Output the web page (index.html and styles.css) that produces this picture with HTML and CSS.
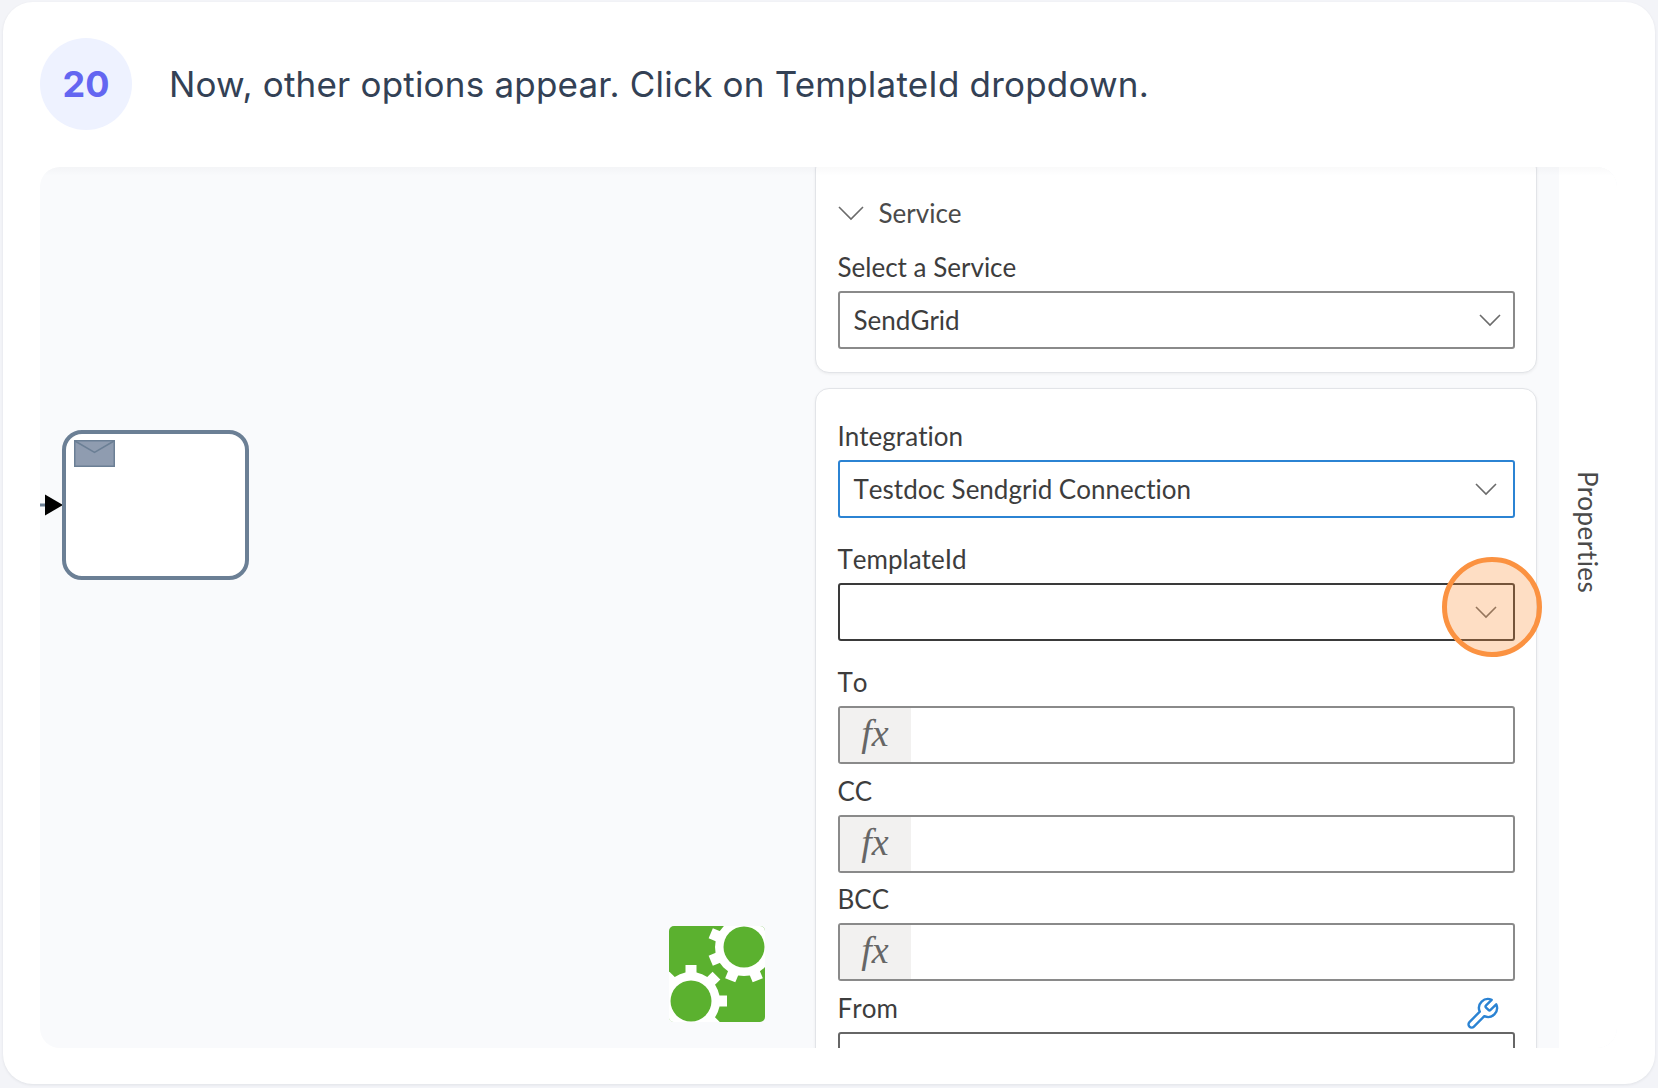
FILE: index.html
```html
<!DOCTYPE html>
<html lang="en">
<head>
  <meta charset="UTF-8" />
  <meta name="viewport" content="width=device-width, initial-scale=1" />
  <title>Step 20</title>
  <link rel="stylesheet" href="styles.css">
</head>
<body>
<main class="card">
  <header class="step-head">
    <span class="step-num">20</span>
    <h1 class="step-title">Now, other options appear. Click on TemplateId dropdown.</h1>
  </header>

  <section class="shot">
    <div class="canvas">
      <svg class="arrow" width="24" height="24" viewBox="0 0 24 24">
        <rect x="0" y="10.5" width="6" height="3" fill="#6b7f95"/>
        <polygon points="5,1.5 23,12 5,22.5" fill="#000"/>
      </svg>
      <div class="task">
        <svg class="task-mail" width="41" height="27" viewBox="0 0 41 27">
          <rect x="0.75" y="0.75" width="39.5" height="25.5" fill="#8f9cb0" stroke="#6b7f95" stroke-width="1.5"/>
          <path d="M1 1l19.5 11.5L40 1" fill="none" stroke="#6b7f95" stroke-width="1.5"/>
        </svg>
      </div>
      <svg class="gears" width="96" height="96" viewBox="0 0 96 96">
        <defs>
          <clipPath id="gearsClip"><rect width="96" height="96" rx="5"/></clipPath>
          <g id="teeth" fill="#fff">
            <rect x="-5.5" y="-36" width="11" height="14"/>
            <rect x="-5.5" y="-36" width="11" height="14" transform="rotate(45)"/>
            <rect x="-5.5" y="-36" width="11" height="14" transform="rotate(90)"/>
            <rect x="-5.5" y="-36" width="11" height="14" transform="rotate(135)"/>
            <rect x="-5.5" y="-36" width="11" height="14" transform="rotate(180)"/>
            <rect x="-5.5" y="-36" width="11" height="14" transform="rotate(225)"/>
            <rect x="-5.5" y="-36" width="11" height="14" transform="rotate(270)"/>
            <rect x="-5.5" y="-36" width="11" height="14" transform="rotate(315)"/>
          </g>
        </defs>
        <g clip-path="url(#gearsClip)">
          <rect width="96" height="96" fill="#5bb12f"/>
          <circle cx="75" cy="21" r="29" fill="#fff"/>
          <use href="#teeth" transform="translate(75 21) rotate(22.5)"/>
          <circle cx="75" cy="21" r="20.5" fill="#5bb12f"/>
          <circle cx="22" cy="75" r="29" fill="#fff"/>
          <use href="#teeth" transform="translate(22 75)"/>
          <circle cx="22" cy="75" r="20.5" fill="#5bb12f"/>
        </g>
      </svg>
    </div>

    <div class="props">
      <div class="panel panel-service">
        <div class="panel-title">
          <svg class="chev chev-title" width="26" height="15" viewBox="0 0 26 15"><path d="M1 1l12 12L25 1"/></svg>
          <span>Service</span>
        </div>
        <div class="field">
          <label class="field-label">Select a Service</label>
          <div class="box select select-service">
            <span>SendGrid</span>
            <svg class="chev" width="22" height="13" viewBox="0 0 22 13"><path d="M1 1l10 10L21 1"/></svg>
          </div>
        </div>
      </div>

      <div class="panel panel-config">
        <div class="field field-wide">
          <label class="field-label">Integration</label>
          <div class="box select box-focus">
            <span>Testdoc Sendgrid Connection</span>
            <svg class="chev" width="22" height="13" viewBox="0 0 22 13"><path d="M1 1l10 10L21 1"/></svg>
          </div>
        </div>
        <div class="field field-wide">
          <label class="field-label">TemplateId</label>
          <div class="box select box-dark">
            <span></span>
            <svg class="chev" width="22" height="13" viewBox="0 0 22 13"><path d="M1 1l10 10L21 1"/></svg>
            <div class="hotspot"></div>
          </div>
        </div>
        <div class="field">
          <label class="field-label">To</label>
          <div class="box"><span class="fx">fx</span></div>
        </div>
        <div class="field">
          <label class="field-label">CC</label>
          <div class="box"><span class="fx">fx</span></div>
        </div>
        <div class="field">
          <label class="field-label">BCC</label>
          <div class="box"><span class="fx">fx</span></div>
        </div>
        <div class="field">
          <div class="label-row">
            <label class="field-label">From</label>
            <svg class="wrench" width="36" height="36" viewBox="0 0 24 24"><path d="M14.7 6.3a1 1 0 0 0 0 1.4l1.6 1.6a1 1 0 0 0 1.4 0l3.77-3.77a6 6 0 0 1-7.94 7.94l-6.91 6.91a2.12 2.12 0 0 1-3-3l6.91-6.91a6 6 0 0 1 7.94-7.94l-3.76 3.76z"/></svg>
          </div>
          <div class="box box-dim"></div>
        </div>
      </div>
    </div>

    <aside class="strip"><span class="strip-label">Properties</span></aside>
  </section>
</main>
</body>
</html>
```

FILE: styles.css
```css
/* Reset and base */
* {
  box-sizing: border-box;
}
html, body {
  height: 100%;
}
body {
  margin: 0;
  padding: 2px 3px 4px 3px;
  background: #f3f4f8;
  font-family: 'Lato', 'Open Sans', sans-serif;
  font-variant-ligatures: none;
  font-kerning: none;
  color: #3d3d3d;
  overflow: hidden;
}
.card {
  height: 1082px;
  background: #fff;
  border-radius: 30px;
  padding: 36px 38px 36px 37px;
  box-shadow: 0 1px 3px rgba(15,23,42,0.08);
}

/* Step heading */
.step-head {
  display: flex;
  align-items: center;
  gap: 37px;
  height: 92px;
}
.step-num {
  flex: none;
  width: 92px;
  height: 92px;
  border-radius: 50%;
  background: #eef2ff;
  color: #6366f1;
  font-family: 'Inter', sans-serif;
  font-size: 36px;
  font-weight: 700;
  display: flex;
  align-items: center;
  justify-content: center;
}
.step-title {
  margin: 0;
  font-family: 'Inter', sans-serif;
  font-size: 35px;
  font-weight: 400;
  font-kerning: normal;
  letter-spacing: 0.2px;
  color: #334155;
  white-space: nowrap;
}

/* Screenshot frame */
.shot {
  position: relative;
  margin-top: 37px;
  height: 881px;
  display: flex;
  background: #f9fafc;
  border-radius: 20px;
  overflow: hidden;
}
.shot::after {
  content: "";
  position: absolute;
  left: 0;
  right: 0;
  top: 0;
  height: 9px;
  background: linear-gradient(rgba(15,23,42,0.025), rgba(15,23,42,0));
}
.canvas {
  position: relative;
  width: 775px;
  flex: none;
}
.arrow {
  position: absolute;
  left: 0;
  top: 326px;
}
.task {
  position: absolute;
  left: 22px;
  top: 263px;
  width: 187px;
  height: 150px;
  background: #fff;
  border: 4px solid #6b7f95;
  border-radius: 20px;
}
.task-mail {
  display: block;
  margin: 6px 0 0 8px;
}
.gears {
  position: absolute;
  left: 629px;
  top: 759px;
}

/* Properties column */
.props {
  flex: none;
  width: 722px;
  margin-top: -12px;
}
.panel {
  background: #fff;
  border: 1px solid #e2e4e8;
  border-radius: 14px;
  padding: 0 21.5px;
  box-shadow: 0 1px 3px rgba(0,0,0,0.06);
}
.panel-service {
  height: 218px;
  padding-top: 42px;
}
.panel-config {
  margin-top: 15px;
  padding-top: 32px;
  height: 760px;
}
.panel-title {
  display: flex;
  align-items: center;
  gap: 15px;
  height: 30px;
  font-size: 26px;
  color: #4a4a4a;
  margin-bottom: 24px;
}
.field-label {
  display: block;
  font-size: 26px;
  line-height: 30px;
  color: #3d3d3d;
}
.field {
  height: 108.5px;
}
.field .field-label {
  height: 39px;
}
.field-wide {
  height: 123px;
}
.label-row {
  display: flex;
  justify-content: space-between;
  height: 39px;
  padding-right: 15px;
}

/* Inputs */
.box {
  position: relative;
  height: 58px;
  display: flex;
  align-items: stretch;
  background: #fff;
  border: 2px solid #8a8a8a;
  border-radius: 3px;
  font-size: 26px;
  color: #3d3d3d;
}
.select {
  align-items: center;
  justify-content: space-between;
  padding: 0 16px 0 14px;
}
.select-service {
  padding-right: 12px;
}
.box-focus {
  border-color: #2b83d3;
}
.box-dark {
  border-color: #3a3a3a;
}
.box-dim {
  border-color: #666;
}
.chev {
  flex: none;
  fill: none;
  stroke: #6b6b6b;
  stroke-width: 1.6;
}
.fx {
  width: 71px;
  padding-bottom: 4px;
  background: #f2f1f0;
  display: flex;
  align-items: center;
  justify-content: center;
  font-family: 'Liberation Serif', serif;
  font-style: italic;
  font-size: 38px;
  color: #666;
}
.wrench {
  align-self: flex-end;
  fill: none;
  stroke: #2b83d3;
  stroke-width: 1.6;
  stroke-linecap: round;
  stroke-linejoin: round;
}

/* Orange highlight on top of the dropdown */
.hotspot {
  position: absolute;
  left: 602px;
  top: -28px;
  width: 100px;
  height: 100px;
  border-radius: 50%;
  border: 5px solid #fb9241;
  background: rgba(251,146,60,0.3);
}

/* Collapsed side tab */
.strip {
  flex: none;
  width: 58px;
  margin-left: 22px;
  background: #fff;
  border-radius: 0 20px 20px 0;
  display: flex;
  justify-content: center;
  padding-top: 304px;
}
.strip-label {
  writing-mode: vertical-rl;
  font-size: 26px;
  line-height: 30px;
  letter-spacing: 0.5px;
  height: 124px;
  color: #4a4a4a;
}
```
